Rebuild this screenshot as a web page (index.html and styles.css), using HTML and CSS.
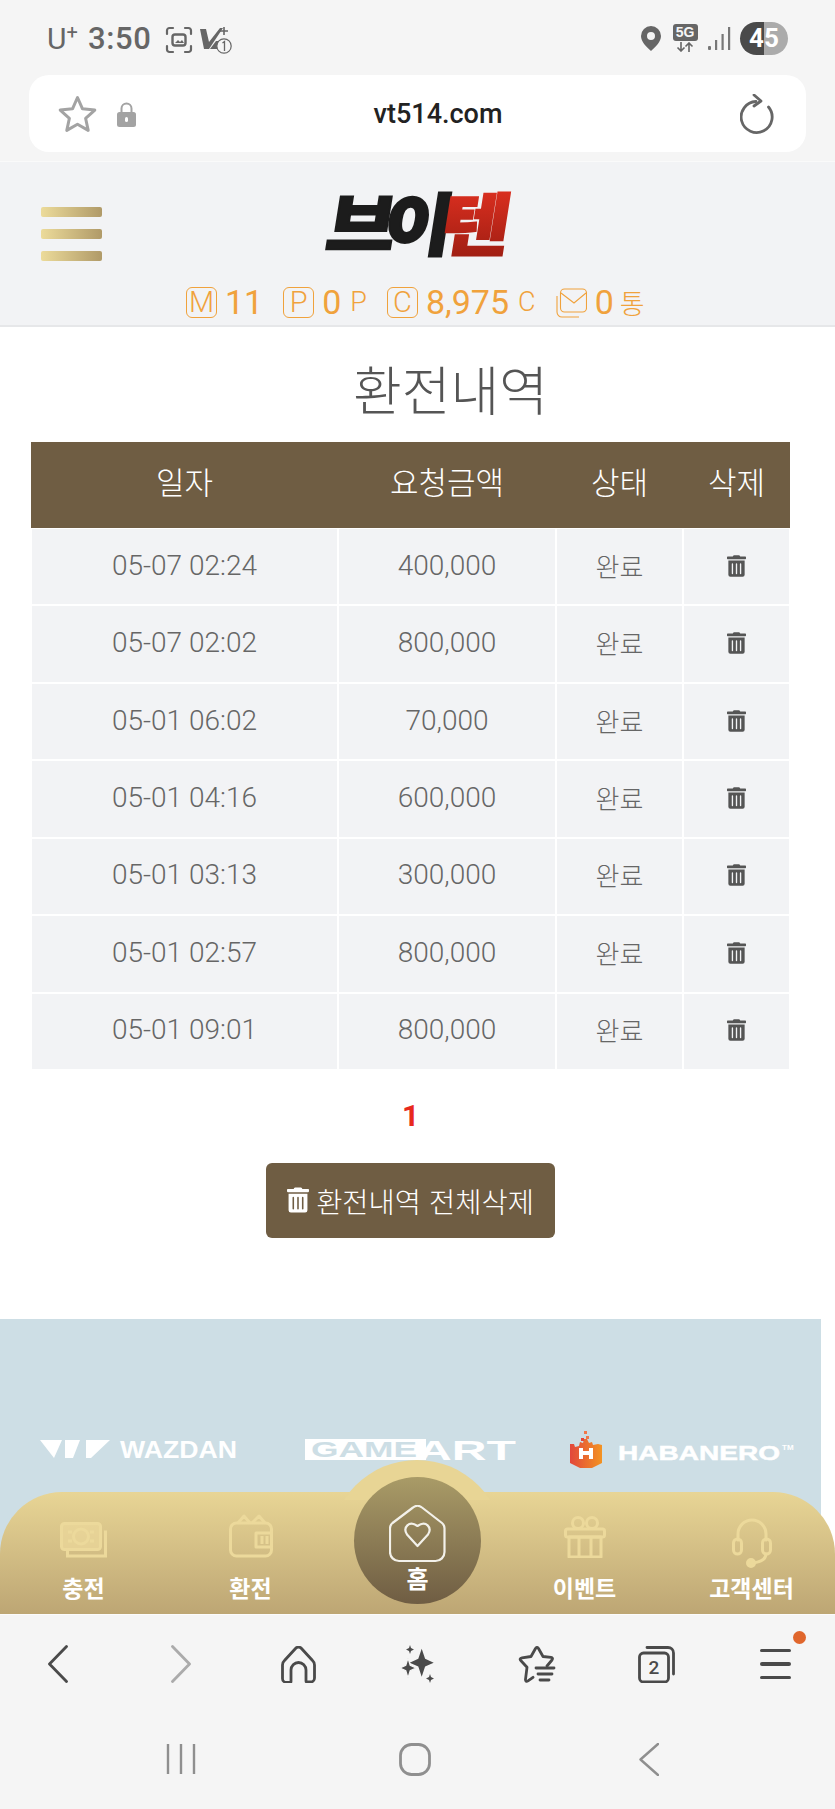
FILE: index.html
```html
<!DOCTYPE html>
<html lang="ko">
<head>
    <meta charset="UTF-8">
    <meta name="viewport" content="width=device-width, initial-scale=1.0">
    <title>환전내역</title>
    <link rel="stylesheet" href="styles.css">
</head>
<body>

    <svg class="defs" width="0" height="0">
        <defs>
            <symbol id="trash" viewBox="0 0 448 512">
                <path fill="currentColor" d="M32 464a48 48 0 0 0 48 48h288a48 48 0 0 0 48-48V128H32zm272-256a16 16 0 0 1 32 0v224a16 16 0 0 1-32 0zm-96 0a16 16 0 0 1 32 0v224a16 16 0 0 1-32 0zm-96 0a16 16 0 0 1 32 0v224a16 16 0 0 1-32 0zM432 32H312l-9.4-18.7A24 24 0 0 0 281.1 0H166.8a23.72 23.72 0 0 0-21.4 13.3L136 32H16A16 16 0 0 0 0 48v32a16 16 0 0 0 16 16h416a16 16 0 0 0 16-16V48a16 16 0 0 0-16-16z"/>
            </symbol>
            <linearGradient id="logoRed" x1="0" y1="0" x2="0" y2="1">
                <stop offset="0" stop-color="#ea3323"/>
                <stop offset="1" stop-color="#951b10"/>
            </linearGradient>
            <linearGradient id="habIcon" x1="0" y1="0" x2="1" y2="0">
                <stop offset="0" stop-color="#e2473c"/>
                <stop offset="1" stop-color="#f39322"/>
            </linearGradient>
        </defs>
    </svg>

    <div class="status-bar">
        <div class="status-left">
            <span class="carrier">U<sup>+</sup></span>
            <span class="clock">3:50</span>
            <svg class="ic-shot" width="28" height="28" viewBox="0 0 28 28" fill="none" stroke="#666" stroke-width="2.2" stroke-linecap="round">
                <path d="M2 8V4.500A2.500 2.500 0 0 1 4.500 2H8M20 2h3.500A2.500 2.500 0 0 1 26 4.500V8M26 20v3.500a2.500 2.500 0 0 1-2.500 2.500H20M8 26H4.500A2.500 2.500 0 0 1 2 23.500V20"/>
                <rect x="7.500" y="8.500" width="13" height="11" rx="2.500" stroke-width="2.400"/>
                <path d="M10 17l3-3 2 2 2-2 2 3z" fill="#666" stroke="none"/>
            </svg>
            <svg class="ic-volte" width="32" height="30" viewBox="0 0 32 30">
                <path d="M0 4h6l3 13L20 3h3L9 24H4z" fill="#666"/>
                <path d="M10 24l6-8h4v8z" fill="#666"/>
                <path d="M24 2v8M20 6h8" stroke="#666" stroke-width="1.600"/>
                <circle cx="24" cy="21" r="7.200" fill="#f5f5f5" stroke="#666" stroke-width="1.200"/>
                <path d="M22.500 18l2-1.500V26" fill="none" stroke="#666" stroke-width="1.300"/>
            </svg>
        </div>
        <div class="status-right">
            <svg width="20" height="25" viewBox="0 0 20 25"><path fill="#666" fill-rule="evenodd" d="M10 0a10 10 0 0 1 10 10c0 5.500-5 10.500-10 15C5 20.500 0 15.500 0 10A10 10 0 0 1 10 0zm0 6a4 4 0 1 0 0 8 4 4 0 0 0 0-8z"/></svg>
            <div class="net">
                <span class="net-5g">5G</span>
                <svg width="18" height="10" viewBox="0 0 18 10" fill="none" stroke="#666" stroke-width="1.600"><path d="M5 0v9M1.500 5.500L5 9l3.500-3.500M13 10V1M9.500 4.500L13 1l3.500 3.500"/></svg>
            </div>
            <svg width="23" height="24" viewBox="0 0 23 24" fill="#777"><rect x="0" y="19" width="3" height="4" rx="1"/><rect x="7" y="13" width="2.200" height="10"/><rect x="13.500" y="7" width="2.200" height="16"/><rect x="20" y="0" width="2.200" height="23"/></svg>
            <div class="battery"><span>45</span></div>
        </div>
    </div>

    <div class="url-wrap">
        <div class="url-bar">
            <svg class="ic-star" width="39" height="38" viewBox="0 0 39 38" fill="none" stroke="#a3a3a3" stroke-width="3" stroke-linejoin="round"><path d="M19.500 2.500l5 11.300 12.300 1.300-9.200 8.200 2.600 12.100-10.700-6.200-10.700 6.200 2.600-12.100-9.200-8.200 12.300-1.300z"/></svg>
            <svg class="ic-lock" width="19" height="25" viewBox="0 0 19 25"><path d="M4.500 11V6.500a5 5 0 0 1 10 0V11" fill="none" stroke="#a3a3a3" stroke-width="2"/><rect y="10" width="19" height="15" rx="2.500" fill="#a3a3a3"/><rect x="8" y="15" width="3" height="5" rx="1.500" fill="#fff"/></svg>
            <span class="url-text">vt514.com</span>
            <svg class="ic-reload" width="34" height="40" viewBox="0 0 34 40" fill="none" stroke="#666" stroke-width="2.800" stroke-linecap="round" stroke-linejoin="round"><path d="M28.500 13A15.500 15.500 0 1 1 16 7.500"/><path d="M14 1l7 6-7 5"/></svg>
        </div>
    </div>

    <div class="viewport">
        <header class="site-header">
            <div class="header-top">
                <div class="hamburger"><span></span><span></span><span></span></div>
                <svg class="logo" width="210" height="108" viewBox="-10 0 210 108">
                    <g transform="translate(17 0) skewX(-9) scale(1.1 1)">
                        <text class="logo-text" x="-2" y="84" fill="#1c1c1c" stroke="#1c1c1c">브</text>
                        <text class="logo-text" x="50" y="84" fill="#1c1c1c" stroke="#1c1c1c">이</text>
                        <text class="logo-text" x="102" y="84" fill="url(#logoRed)" stroke="url(#logoRed)">텐</text>
                    </g>
                </svg>
                <div></div>
            </div>
            <div class="stats">
                <div class="stat"><span class="stat-box">M</span><span class="stat-num">11</span></div>
                <div class="stat"><span class="stat-box">P</span><span class="stat-num">0</span><span class="stat-unit">P</span></div>
                <div class="stat"><span class="stat-box">C</span><span class="stat-num">8,975</span><span class="stat-unit">C</span></div>
                <div class="stat">
                    <svg width="31" height="30" viewBox="0 0 31 30" fill="none" stroke="#f0a23c" stroke-width="1.100"><rect x="4.500" y="1" width="26" height="23" rx="4"/><path d="M5 5l13 10L30 5"/><path d="M1 8v16a5 5 0 0 0 5 5h17"/></svg>
                    <span class="stat-num">0</span><span class="stat-unit stat-unit-kr">통</span>
                </div>
            </div>
        </header>

        <main class="content">
            <h1 class="page-title">환전내역</h1>
            <table class="history">
                <thead>
                    <tr><th class="col-date">일자</th><th class="col-amount">요청금액</th><th class="col-state">상태</th><th class="col-del">삭제</th></tr>
                </thead>
                <tbody>
                    <tr><td>05-07 02:24</td><td>400,000</td><td class="kr">완료</td><td><svg class="trash"><use href="#trash"/></svg></td></tr>
                    <tr><td>05-07 02:02</td><td>800,000</td><td class="kr">완료</td><td><svg class="trash"><use href="#trash"/></svg></td></tr>
                    <tr><td>05-01 06:02</td><td>70,000</td><td class="kr">완료</td><td><svg class="trash"><use href="#trash"/></svg></td></tr>
                    <tr><td>05-01 04:16</td><td>600,000</td><td class="kr">완료</td><td><svg class="trash"><use href="#trash"/></svg></td></tr>
                    <tr><td>05-01 03:13</td><td>300,000</td><td class="kr">완료</td><td><svg class="trash"><use href="#trash"/></svg></td></tr>
                    <tr><td>05-01 02:57</td><td>800,000</td><td class="kr">완료</td><td><svg class="trash"><use href="#trash"/></svg></td></tr>
                    <tr><td>05-01 09:01</td><td>800,000</td><td class="kr">완료</td><td><svg class="trash"><use href="#trash"/></svg></td></tr>
                </tbody>
            </table>
            <div class="pagination">1</div>
            <div class="btn-row">
                <button class="btn-delete-all"><svg class="trash-btn"><use href="#trash"/></svg>환전내역 전체삭제</button>
            </div>
        </main>

        <section class="providers">
            <svg class="pv-wazdan" width="197" height="37" viewBox="0 0 197 37" fill="#fff">
                <path d="M0 9h22l-8 18zM25 9h15l-7 18h-8zM46 9h24L51 27h-5z"/>
                <text class="pv-text" x="80" y="27" textLength="117" lengthAdjust="spacingAndGlyphs" font-size="24">WAZDAN</text>
            </svg>
            <svg class="pv-gameart" width="211" height="37" viewBox="0 0 211 37">
                <rect x="0" y="8" width="121" height="21" fill="#fff"/>
                <text class="pv-text" x="6" y="26" textLength="106" lengthAdjust="spacingAndGlyphs" font-size="22" fill="#cddee5">GAME</text>
                <text class="pv-text" x="112" y="29" textLength="99" lengthAdjust="spacingAndGlyphs" font-size="28" fill="#fff">ART</text>
            </svg>
            <svg class="pv-habanero" width="225" height="37" viewBox="0 0 225 37">
                <path d="M0 13l4 0 1 3 4-1 1-4 3 1 1-4 3 0 2 4 3-1 1 3 5-1 4 1v18l-16 8-16-8z" fill="url(#habIcon)"/>
                <rect x="14" y="0" width="3" height="3" fill="#f0794a"/><rect x="16" y="5" width="3" height="3" fill="#f0794a"/><rect x="11" y="7" width="3" height="3" fill="#e2473c"/>
                <path d="M9 17h4v3h6v-3h4v11h-4v-4h-6v4H9z" fill="#fff"/>
                <text class="pv-text" x="48" y="29" textLength="162" lengthAdjust="spacingAndGlyphs" font-size="21" fill="#fff" stroke="#fff" stroke-width=".5">HABANERO</text>
                <text x="212" y="19" font-family="Liberation Sans" font-size="8" font-weight="700" fill="#fff">TM</text>
            </svg>
        </section>

        <nav class="tabbar">
            <div class="tabbar-bump"></div>
            <a class="tab">
                <svg class="tab-icon" width="47" height="36" viewBox="0 0 47 36" fill="none" stroke="#ecd99b" stroke-width="3"><rect x="1.500" y="1.500" width="39" height="26" rx="3" fill="#ecd99b" fill-opacity=".7"/><path d="M44 10h1.500v24h-38v-5"/><circle cx="21" cy="14.500" r="7.500"/><path d="M8 10h4M8 19h4M30 10h4M30 19h4"/></svg>
                <span>충전</span>
            </a>
            <a class="tab">
                <svg class="tab-icon" width="44" height="44" viewBox="0 0 44 44" fill="none" stroke="#ecd99b" stroke-width="3" stroke-linejoin="round"><rect x="1.500" y="9" width="41" height="33" rx="6"/><path d="M9 9l6-7 6 7M23 9l7-7 6 7"/><rect x="27" y="19" width="15.500" height="14"/><path d="M33 22v8M38 22v8"/></svg>
                <span>환전</span>
            </a>
            <a class="tab tab-home">
                <div class="home-circle">
                    <svg width="57" height="58" viewBox="0 0 57 58" fill="none" stroke="#f3f1ea" stroke-width="2.200" stroke-linejoin="round"><path d="M24 2.500a7 7 0 0 1 9 0l20 15.500a7 7 0 0 1 2.500 5.500V47a9 9 0 0 1-9 9H10a9 9 0 0 1-9-9V23.500A7 7 0 0 1 3.500 18z"/><path d="M28.500 41L18 29.500c-4.500-7 2-14.500 10.500-8.500 8.500-6 15 1.500 10.500 8.500z"/></svg>
                    <span>홈</span>
                </div>
            </a>
            <a class="tab">
                <svg class="tab-icon" width="42" height="42" viewBox="0 0 42 42" fill="none" stroke="#ecd99b" stroke-width="3" stroke-linejoin="round"><rect x="1.500" y="13" width="39" height="8" rx="2"/><rect x="5" y="21" width="32" height="20"/><path d="M15 21v20M27 21v20"/><circle cx="14" cy="7" r="5.500"/><circle cx="28" cy="7" r="5.500"/></svg>
                <span>이벤트</span>
            </a>
            <a class="tab">
                <svg class="tab-icon" width="40" height="52" viewBox="0 0 40 52" fill="none" stroke="#ecd99b" stroke-width="3" stroke-linecap="round"><path d="M6 24V18a14 14 0 0 1 28 0v6"/><rect x="1.500" y="23" width="8" height="15" rx="4"/><rect x="30.500" y="23" width="8" height="15" rx="4"/><path d="M34 38c0 5-6 8-13 9"/><circle cx="19" cy="47" r="3.500" fill="#ecd99b"/></svg>
                <span>고객센터</span>
            </a>
        </nav>
    </div>

    <div class="browser-bar">
        <svg class="ic-back" width="20" height="38" viewBox="0 0 20 38" fill="none" stroke="#4a4a4a" stroke-width="2.800" stroke-linecap="round" stroke-linejoin="round"><path d="M18.500 1.500L1.500 19l17 17.500"/></svg>
        <svg class="ic-forward" width="20" height="38" viewBox="0 0 20 38" fill="none" stroke="#ababab" stroke-width="2.800" stroke-linecap="round" stroke-linejoin="round"><path d="M1.500 1.500L18.500 19 1.500 36.500"/></svg>
        <svg width="35" height="37" viewBox="0 0 35 37" fill="none" stroke="#4a4a4a" stroke-width="2.800" stroke-linejoin="round"><path d="M14.500 2.500a4 4 0 0 1 6 0l11 12a6 6 0 0 1 2 4.500v13a4 4 0 0 1-4 4H26a1 1 0 0 1-1-1V24a7.500 7.500 0 0 0-15 0v11.500a1 1 0 0 1-1 1H5.500a4 4 0 0 1-4-4V19a6 6 0 0 1 2-4.500z"/></svg>
        <svg width="34" height="39" viewBox="0 0 34 39" fill="#4a4a4a">
            <polygon points="21.700,3.700 25.100,13.800 33.700,17.700 25.100,21.600 21.700,31.700 18.300,21.600 9.700,17.700 18.300,13.800"/>
            <polygon points="8,13 10.200,20.200 16,23 10.200,25.800 8,33 5.800,25.800 0,23 5.800,20.200" stroke="#f5f5f5" stroke-width="1.200"/>
            <polygon points="10,0 11,3 14,4.500 11,6 10,9 9,6 6,4.500 9,3"/>
            <polygon points="30,29 31,32 34,33.500 31,35 30,38 29,35 26,33.500 29,32"/>
        </svg>
        <svg width="39" height="37" viewBox="0 0 39 37" fill="none" stroke="#4a4a4a" stroke-width="2.800" stroke-linecap="round" stroke-linejoin="round"><path d="M30 20l5-6c1-1.500.5-2.500-1-2.700l-8-.8-4.500-8c-1-1.500-2-1.500-3 0l-4.500 8-9 1.300c-2 .3-2.500 1.500-1 3l6 6.500-1.500 12c-.2 2 1 2.500 2.500 1.500l5-3.500"/><path d="M19 22h18M21 28h14M23 34h9"/></svg>
        <svg width="37" height="37" viewBox="0 0 37 37" fill="none" stroke="#4a4a4a" stroke-width="2.800" stroke-linecap="round"><rect x="1.500" y="7" width="29" height="29" rx="4"/><path d="M9 1.500h21a5.500 5.500 0 0 1 5.500 5.500v21"/><text x="16" y="28" text-anchor="middle" font-family="Roboto" font-size="19" font-weight="500" fill="#4a4a4a" stroke="none">2</text></svg>
        <div class="menu-btn"><span></span><span></span><span></span><i class="menu-dot"></i></div>
    </div>

    <div class="system-nav">
        <svg width="30" height="32" viewBox="0 0 30 32" stroke="#8f8f8f" stroke-width="2.400"><path d="M2 1v30M15 1v30M28 1v30"/></svg>
        <svg width="32" height="33" viewBox="0 0 32 33" fill="none" stroke="#8f8f8f" stroke-width="2.800"><rect x="1.500" y="1.500" width="29" height="30" rx="11"/></svg>
        <svg width="20" height="33" viewBox="0 0 20 33" fill="none" stroke="#8f8f8f" stroke-width="2.400" stroke-linecap="round" stroke-linejoin="round"><path d="M19 1L1.500 16.500 19 32"/></svg>
    </div>

</body>
</html>
```

FILE: styles.css
```css
* {
    box-sizing: border-box;
}
html, body {
    margin: 0;
    padding: 0;
}
body {
    width: 835px;
    height: 1809px;
    overflow: hidden;
    background: #f5f5f5;
    display: flex;
    flex-direction: column;
    font-family: "Noto Sans CJK KR", Roboto, sans-serif;
}
.defs {
    position: absolute;
}

/* phone status bar */
.status-bar {
    height: 75px;
    flex: none;
    display: flex;
    justify-content: space-between;
    padding: 20px 47px 0 47px;
}
.status-left {
    display: flex;
    align-items: flex-start;
    color: #666;
    font-family: Roboto, sans-serif;
}
.carrier {
    font-size: 30px;
    line-height: 38px;
    font-weight: 400;
    width: 41px;
}
.carrier sup {
    font-size: 20px;
    line-height: 0;
    vertical-align: 10px;
}
.clock {
    font-size: 31px;
    line-height: 38px;
    font-weight: 500;
    letter-spacing: 0.6px;
    width: 77px;
}
.ic-shot {
    margin-top: 6px;
}
.ic-volte {
    margin: 5px 0 0 7px;
}
.status-right {
    display: flex;
    align-items: flex-start;
    gap: 12px;
}
.status-right > svg:first-child {
    margin-top: 6px;
}
.status-right > svg:nth-child(3) {
    margin-top: 7px;
    margin-left: -2px;
}
.net {
    width: 26px;
    display: flex;
    flex-direction: column;
    align-items: center;
    margin-top: 4px;
    margin-left: -1px;
}
.net-5g {
    width: 25px;
    height: 17px;
    border-radius: 3px;
    background: #666;
    color: #f5f5f5;
    font: 700 14px/17px "Liberation Sans", sans-serif;
    text-align: center;
    margin-bottom: 1px;
}
.battery {
    width: 48px;
    height: 33px;
    margin: 2px 0 0 -3px;
    border-radius: 17px;
    background: linear-gradient(90deg, #4a4a4a 50%, #ababab 50%);
    color: #fff;
    font: 700 26px/33px Roboto, sans-serif;
    text-align: center;
}

/* url bar */
.url-wrap {
    height: 87px;
    flex: none;
    padding: 0 29px;
    border-bottom: 1px solid #fafafa;
}
.url-bar {
    height: 77px;
    background: #fff;
    border-radius: 20px;
    display: flex;
    align-items: center;
    padding: 0 32px 0 29px;
}
.ic-star {
    margin-top: 1px;
}
.ic-lock {
    margin-left: 20px;
    margin-top: 2px;
}
.url-text {
    flex: 1;
    text-align: center;
    font: 500 27px/30px Roboto, sans-serif;
    color: #222;
}

/* page area */
.viewport {
    position: relative;
    height: 1452px;
    flex: none;
    background: #fff;
    overflow: hidden;
}
.site-header {
    height: 165px;
    background: #f2f3f5;
    border-bottom: 2px solid #e6e7e9;
    padding-top: 30px;
}
.header-top {
    display: grid;
    grid-template-columns: 1fr auto 1fr;
    height: 66px;
    align-items: start;
    padding-left: 41px;
}
.hamburger {
    width: 61px;
    margin-top: 15px;
    display: flex;
    flex-direction: column;
    gap: 12px;
}
.hamburger span {
    height: 10px;
    border-radius: 2px;
    background: linear-gradient(90deg, #ecdb9a, #b09a68);
}
.logo {
    margin: -26px 0 0 -42px;
}
.logo-text {
    font-family: "Noto Sans CJK KR", sans-serif;
    font-size: 68px;
    font-weight: 900;
    stroke-width: 2px;
}
.stats {
    display: flex;
    padding-left: 186px;
    gap: 20px;
    margin-top: 29px;
    color: #f0a23c;
}
.stat {
    display: flex;
    align-items: center;
    height: 31px;
}
.stat-box {
    width: 31px;
    height: 31px;
    border: 1px solid #f0a23c;
    border-radius: 6px;
    text-align: center;
    font: 300 29px/29px Roboto, sans-serif;
}
.stat-num {
    font: 400 34px/31px Roboto, sans-serif;
    margin-left: 8px;
}
.stat-unit {
    font: 300 27px/31px Roboto, sans-serif;
    margin-left: 9px;
}
.stat-unit-kr {
    font-family: "Noto Sans CJK KR", sans-serif;
    font-size: 27px;
    margin-left: 6px;
}

.content {
    width: 821px;
    padding: 31px 31px 0;
}
.page-title {
    margin: 0 0 24px;
    padding-left: 80px;
    font-size: 53px;
    line-height: 60px;
    font-weight: 300;
    color: #555;
    text-align: center;
}
.history {
    width: 759px;
    border-collapse: separate;
    border-spacing: 0;
    table-layout: fixed;
}
.history th {
    height: 86px;
    background: #6f5d43;
    color: #fff;
    font-size: 31px;
    font-weight: 300;
    padding: 0 0 9px;
}
.col-date {
    width: 307px;
}
.col-amount {
    width: 218px;
}
.col-state {
    width: 127px;
}
.history td {
    height: 77.43px;
    background: #f2f3f5;
    border: 1px solid #fff;
    color: #666;
    font: 300 28px/30px Roboto, sans-serif;
    text-align: center;
    padding: 0 0 2px;
}
.history td.kr {
    font-family: "Noto Sans CJK KR", sans-serif;
    font-size: 26px;
    font-weight: 300;
}
.trash {
    display: block;
    width: 19px;
    height: 22px;
    margin: 0 auto;
    color: #555;
}
.pagination {
    margin-top: 26px;
    text-align: center;
    color: #e8291c;
    font: 700 30px/40px Roboto, sans-serif;
}
.btn-row {
    display: flex;
    justify-content: center;
    margin-top: 27px;
}
.btn-delete-all {
    width: 289px;
    height: 75px;
    border: none;
    border-radius: 6px;
    background: #6f5d43;
    color: #fff;
    font-family: "Noto Sans CJK KR", sans-serif;
    font-size: 28.5px;
    font-weight: 300;
    display: flex;
    align-items: center;
    justify-content: center;
    gap: 7px;
    padding: 0;
}
.trash-btn {
    width: 22px;
    height: 26px;
}

.providers {
    width: 821px;
    height: 300px;
    margin-top: 81px;
    background: #cddee5;
    display: flex;
    align-items: flex-start;
    padding: 112px 0 0 40px;
}
.pv-text {
    font-family: "Liberation Sans", sans-serif;
    font-weight: 700;
}
.pv-gameart {
    margin-left: 68px;
}
.pv-habanero {
    margin-left: 54px;
}

/* gold bottom tabs, sits over the page */
.tabbar {
    position: absolute;
    left: 0;
    right: 0;
    bottom: 0;
    height: 122px;
    border-radius: 62px 62px 0 0;
    background: linear-gradient(180deg, #e8d595, #bda674);
    display: grid;
    grid-template-columns: repeat(5, 1fr);
}
.tabbar-bump {
    position: absolute;
    left: 330px;
    top: -32px;
    width: 174px;
    height: 174px;
    border-radius: 50%;
    background: #e8d595;
    clip-path: inset(0 0 134px 0);
}
.tab {
    grid-row: 1;
    position: relative;
    display: flex;
    flex-direction: column;
    align-items: center;
    justify-content: flex-end;
    padding-bottom: 14px;
    color: #fff;
    font-size: 23px;
    font-weight: 700;
    line-height: 26px;
}
.tab-icon {
    position: absolute;
    bottom: 56px;
}
.tab:last-of-type .tab-icon {
    bottom: 46px;
}
.tab-home {
    z-index: 1;
}
.home-circle {
    position: absolute;
    left: 20px;
    top: -15px;
    width: 127px;
    height: 127px;
    border-radius: 50%;
    background: linear-gradient(180deg, #a99b67, #6f5d43);
    display: flex;
    flex-direction: column;
    align-items: center;
    padding-top: 28px;
    font-size: 24px;
}
.home-circle span {
    margin-top: 2px;
}

/* samsung browser toolbar */
.browser-bar {
    height: 100px;
    flex: none;
    display: grid;
    grid-template-columns: repeat(7, 1fr);
    justify-items: center;
    align-items: center;
    padding-bottom: 1px;
    border-top: 1px solid #fbfbfb;
}
.ic-back {
    margin-right: 3px;
}
.ic-forward {
    margin-left: 4px;
}
.menu-btn {
    position: relative;
    width: 31px;
    display: flex;
    flex-direction: column;
    gap: 10px;
}
.menu-btn span {
    height: 3.500px;
    background: #4a4a4a;
    border-radius: 2px;
}
.menu-dot {
    position: absolute;
    right: -15px;
    top: -18px;
    width: 13px;
    height: 13px;
    border-radius: 50%;
    background: #e0662c;
}
.system-nav {
    flex: 1;
    display: grid;
    grid-template-columns: repeat(3, 234px);
    justify-items: center;
    align-items: start;
    padding: 29px 0 0 64px;
}
```
